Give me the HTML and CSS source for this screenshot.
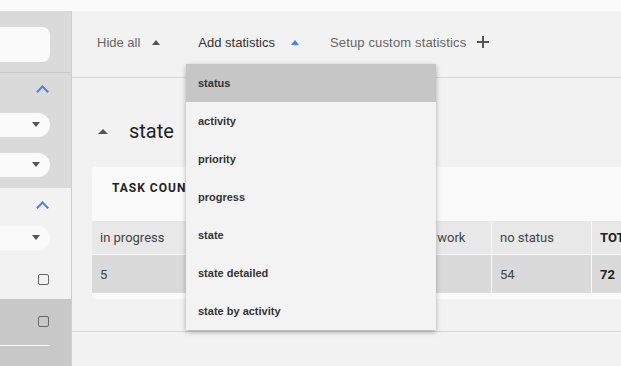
FILE: index.html
```html
<!DOCTYPE html>
<html>
	<head>
		<title>Statistics</title>
		<link rel="stylesheet" href="styles.css">
	</head>
	<body>
		<div class="top-strip"></div>
		<div class="app">
			<div class="sidebar">
				<div class="side-section first">
					<div class="field search"></div>
				</div>
				<div class="side-section">
					<div class="side-row"><span class="chevron"></span></div>
					<div class="field pill"><span class="caret"></span></div>
					<div class="field pill gap"><span class="caret"></span></div>
				</div>
				<div class="side-section light">
					<div class="side-row"><span class="chevron"></span></div>
					<div class="field pill small-gap"><span class="caret"></span></div>
					<div class="side-row check-row"><span class="checkbox"></span></div>
				</div>
				<div class="side-section dark">
					<div class="side-row check-row"><span class="checkbox"></span></div>
					<div class="divider"></div>
					<div class="side-row check-row last"><span class="checkbox"></span></div>
				</div>
			</div>

			<div class="main">
				<div class="toolbar">
					<span class="tool hide-all">Hide all <span class="tri"></span></span>
					<span class="tool active add-stats">Add statistics <span class="tri blue"></span></span>
					<span class="tool setup">Setup custom statistics <span class="plus"></span></span>
				</div>

				<ul class="menu">
					<li class="selected">status</li>
					<li>activity</li>
					<li>priority</li>
					<li>progress</li>
					<li>state</li>
					<li>state detailed</li>
					<li>state by activity</li>
				</ul>

				<div class="content">
					<h2 class="stat-title"><span class="tri"></span>state</h2>
					<div class="card">
						<div class="card-title">TASK COUNT</div>
						<table class="stats">
							<thead>
								<tr>
									<td>in progress</td>
									<td>done</td>
									<td>paused</td>
									<td>out of work</td>
									<td>no status</td>
									<td class="total">TOTAL</td>
								</tr>
							</thead>
							<tbody>
								<tr>
									<td>5</td>
									<td>8</td>
									<td>5</td>
									<td></td>
									<td>54</td>
									<td class="total">72</td>
								</tr>
							</tbody>
						</table>
					</div>
				</div>
			</div>
		</div>
	</body>
</html>
```

FILE: styles.css
```css
body{
	margin:0;
	width:621px;
	height:366px;
	overflow:hidden;
	background-color:#f2f2f2;
	font-family:Roboto, sans-serif;
}
.top-strip{
	height:11px;
	background-color:#fafafa;
}
.app{
	display:flex;
	height:355px;
}

/* sidebar */
.sidebar{
	width:71px;
	flex-shrink:0;
	overflow:hidden;
	border-right:1px solid #cfcfcf;
	background-color:#c8c8c8;
}
.side-section{
	background-color:#dadada;
	padding-bottom:11px;
}
.side-section.first{
	padding:16px 0 10px;
	border-bottom:1px solid #c9c9c9;
}
.side-section.light{
	background-color:#f2f2f2;
	padding-bottom:8px;
}
.side-section.dark{
	background-color:#c8c8c8;
	padding-bottom:0;
}
.field{
	margin-left:-150px;
	margin-right:21px;
	background-color:#fafafa;
	position:relative;
}
.search{
	height:35px;
	border-radius:8px;
}
.pill{
	height:24px;
	border-radius:12px;
	margin-top:14px;
}
.pill.gap{
	margin-top:16px;
}
.pill.small-gap{
	margin-top:11px;
}
.caret{
	position:absolute;
	right:10px;
	top:9px;
	border-left:4px solid transparent;
	border-right:4px solid transparent;
	border-top:5px solid #555;
}
.side-row{
	height:20px;
	padding-top:6px;
	padding-right:22px;
	display:flex;
	justify-content:flex-end;
	align-items:center;
}
.side-section.light .side-row{
	padding-top:7px;
}
.side-row.check-row,
.side-section.light .side-row.check-row{
	height:24px;
	padding-top:0;
	margin-top:17px;
}
.side-section.dark .side-row.check-row{
	margin-top:10px;
}
.side-section.dark .side-row.check-row.last{
	margin-top:13px;
}
.chevron{
	width:7px;
	height:7px;
	border-left:2px solid #4a7cff;
	border-top:2px solid #4a7cff;
	transform:rotate(45deg);
	margin-top:5px;
	margin-right:2px;
}
.checkbox{
	width:9px;
	height:9px;
	border:1.5px solid #666;
	border-radius:2px;
}
.divider{
	height:1px;
	margin-top:12px;
	margin-right:21px;
	background-color:#fafafa;
}

/* main */
.main{
	flex:1;
	position:relative;
	overflow:hidden;
}
.toolbar{
	height:62px;
	padding-bottom:4px;
	display:flex;
	align-items:center;
	padding-left:25px;
	border-bottom:1px solid #d9d9d9;
	font-family:"Liberation Sans", Arial, sans-serif;
	font-size:13px;
	color:#666;
}
.tool{
	display:flex;
	align-items:center;
	white-space:nowrap;
}
.tool.active{
	color:#333;
}
.hide-all{
	margin-right:38px;
}
.add-stats{
	margin-right:31px;
}
.tri{
	display:inline-block;
	margin-left:12px;
	border-left:4.5px solid transparent;
	border-right:4.5px solid transparent;
	border-bottom:5px solid #555;
}
.tri.blue{
	margin-left:16px;
	border-bottom-color:#4a7cff;
}
.setup{
	letter-spacing:0.15px;
}
.plus{
	position:relative;
	display:inline-block;
	width:12px;
	height:12px;
	margin-left:11px;
}
.plus:before,
.plus:after{
	content:"";
	position:absolute;
	background-color:#555;
}
.plus:before{
	left:5px;
	top:0;
	width:2px;
	height:12px;
}
.plus:after{
	left:0;
	top:5px;
	width:12px;
	height:2px;
}

/* dropdown */
.menu{
	position:absolute;
	left:114px;
	top:53px;
	width:250px;
	margin:0;
	padding:0;
	list-style:none;
	background-color:#f3f3f3;
	box-shadow:0 2px 5px rgba(0,0,0,0.3);
	z-index:2;
}
.menu li{
	height:38px;
	line-height:38px;
	padding-left:12px;
	font-family:"Liberation Sans", Arial, sans-serif;
	font-size:11px;
	font-weight:bold;
	color:#333;
}
.menu li.selected{
	background-color:#c6c6c6;
}

/* content */
.content{
	padding:36px 0 32px 20px;
	border-bottom:1px solid #d6d6d6;
}
.stat-title{
	margin:0;
	height:34px;
	display:flex;
	align-items:center;
	font-size:20px;
	font-weight:normal;
	color:#222;
}
.stat-title .tri{
	margin-left:6px;
	margin-right:21px;
	border-left-width:5px;
	border-right-width:5px;
}
.card{
	margin-top:19px;
	width:700px;
	padding-bottom:6px;
	background-color:#fafafa;
	border-radius:4px;
}
.card-title{
	padding:12px 20px 24px;
	line-height:18px;
	font-size:12px;
	font-weight:bold;
	letter-spacing:1px;
	color:#222;
}
.stats{
	border-collapse:collapse;
	font-size:13px;
	color:#444;
}
.stats td{
	width:91px;
	padding:0 0 0 8px;
	border-right:1px solid #fafafa;
	white-space:nowrap;
}
.stats thead td{
	height:33px;
	background-color:#e8e8e8;
	border-bottom:1px solid #fafafa;
}
.stats tbody td{
	height:38px;
	background-color:#dadada;
}
.stats td.total{
	font-weight:bold;
	color:#222;
}
```
